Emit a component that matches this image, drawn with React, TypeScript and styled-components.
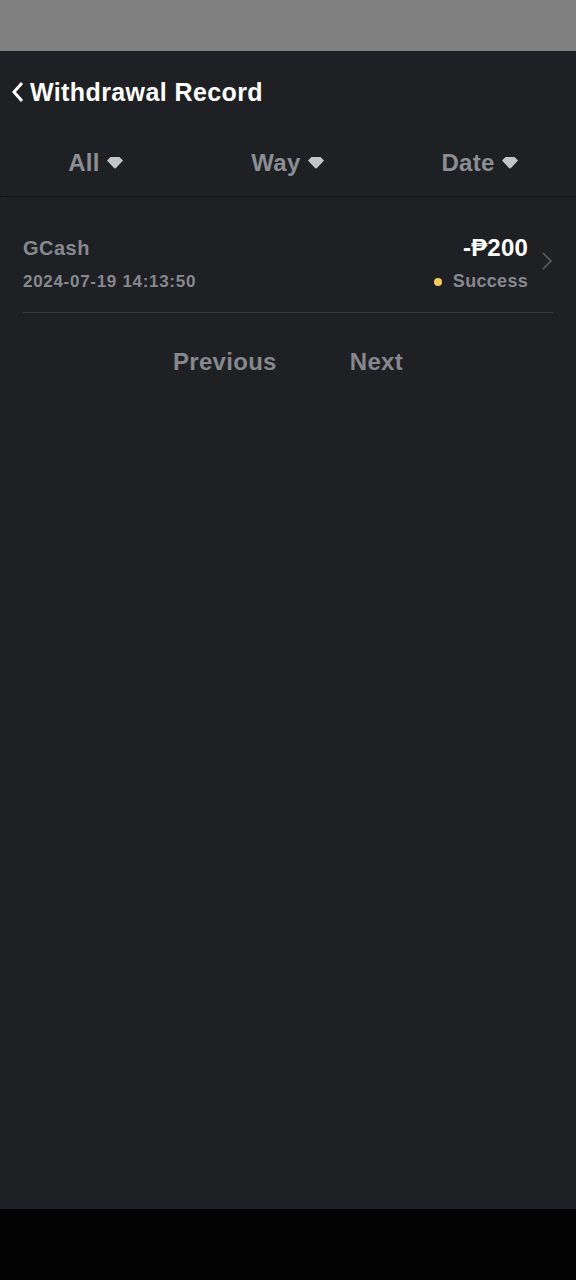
import React from 'react'
import styled, { createGlobalStyle } from 'styled-components'

const GlobalStyle = createGlobalStyle`
  html, body {
    margin: 0;
    padding: 0;
    background: #030303;
  }
  body {
    font-family: "Liberation Sans", Arial, sans-serif;
  }
`

const Screen = styled.div`
  width: 576px;
  height: 1280px;
  display: flex;
  flex-direction: column;
  background: #030303;
`

const StatusBar = styled.div`
  height: 51px;
  background: #808080;
  flex-shrink: 0;
`

const Page = styled.div`
  height: 1158px;
  background: #1f2023;
  display: flex;
  flex-direction: column;
`

const Header = styled.div`
  height: 82px;
  display: flex;
  align-items: center;
  padding-left: 11px;
  gap: 5px;
`

const BackButton = styled.button`
  background: none;
  border: none;
  padding: 0;
  display: flex;
  align-items: center;
  color: #fff;
  cursor: pointer;
`

const Title = styled.h1`
  margin: 0;
  font-size: 25px;
  font-weight: 700;
  color: #fff;
  letter-spacing: 0.4px;
`

const Tabs = styled.div`
  display: grid;
  grid-template-columns: repeat(3, 1fr);
  height: 63px;
  border-bottom: 1px dotted #0a0a0c;
`

const Tab = styled.button`
  background: none;
  border: none;
  padding: 0 0 4px;
  display: flex;
  align-items: center;
  justify-content: center;
  gap: 6px;
  font-family: inherit;
  font-size: 24px;
  font-weight: 700;
  color: #8b8e94;
  letter-spacing: 0.3px;
  cursor: pointer;
`

const Record = styled.div`
  margin: 0 23px;
  padding: 37px 0 20px;
  display: flex;
  align-items: center;
  border-bottom: 1px solid #3a3b3f;
`

const RecordMain = styled.div`
  flex: 1;
  display: flex;
  flex-direction: column;
  gap: 9px;
`

const Line = styled.div`
  display: flex;
  justify-content: space-between;
  align-items: center;
`

const Method = styled.span`
  font-size: 20px;
  font-weight: 700;
  color: #86898f;
  letter-spacing: 0.5px;
`

const Amount = styled.span`
  font-size: 24px;
  font-weight: 700;
  color: #fff;
  letter-spacing: 0.2px;
`

const Time = styled.span`
  font-size: 17px;
  font-weight: 700;
  color: #86898f;
  letter-spacing: 0.7px;
`

const Status = styled.span`
  display: flex;
  align-items: center;
  gap: 11px;
  font-size: 18px;
  font-weight: 700;
  color: #86898f;
  letter-spacing: 0.3px;
`

const Dot = styled.span<{ $color: string }>`
  width: 8px;
  height: 8px;
  border-radius: 50%;
  background: ${(p) => p.$color};
`

const Arrow = styled.div`
  width: 25px;
  display: flex;
  justify-content: flex-end;
  padding-bottom: 4px;
`

const Pager = styled.div`
  display: flex;
  justify-content: center;
  gap: 73px;
  padding-top: 35px;
`

const PageButton = styled.button`
  background: none;
  border: none;
  padding: 0;
  font-family: inherit;
  font-size: 24px;
  font-weight: 700;
  color: #85888e;
  letter-spacing: 0.3px;
  cursor: pointer;
`

const Caret = () => (
  <svg width="18" height="13" viewBox="0 0 18 13">
    <path d="M4.5 1h9l3.5 3.5L10 12c-.6.6-1.4.6-2 0L1 4.5z" fill="#c4c5c8" />
  </svg>
)

const tabs = ['All', 'Way', 'Date']

export default function App() {
  return (
    <>
      <GlobalStyle />
      <Screen>
        <StatusBar />
        <Page>
          <Header>
            <BackButton>
              <svg width="14" height="22" viewBox="0 0 14 22">
                <path d="M11 2L3 11l8 9" stroke="#fff" strokeWidth="3" fill="none" />
              </svg>
            </BackButton>
            <Title>Withdrawal Record</Title>
          </Header>
          <Tabs>
            {tabs.map((t) => (
              <Tab key={t}>
                {t}
                <Caret />
              </Tab>
            ))}
          </Tabs>
          <Record>
            <RecordMain>
              <Line>
                <Method>GCash</Method>
                <Amount>-₱200</Amount>
              </Line>
              <Line>
                <Time>2024-07-19 14:13:50</Time>
                <Status>
                  <Dot $color="#f3cd5b" />
                  Success
                </Status>
              </Line>
            </RecordMain>
            <Arrow>
              <svg width="12" height="20" viewBox="0 0 12 20">
                <path d="M2 2l8 8-8 8" stroke="#5c5e63" strokeWidth="1.6" fill="none" />
              </svg>
            </Arrow>
          </Record>
          <Pager>
            <PageButton>Previous</PageButton>
            <PageButton>Next</PageButton>
          </Pager>
        </Page>
      </Screen>
    </>
  )
}
